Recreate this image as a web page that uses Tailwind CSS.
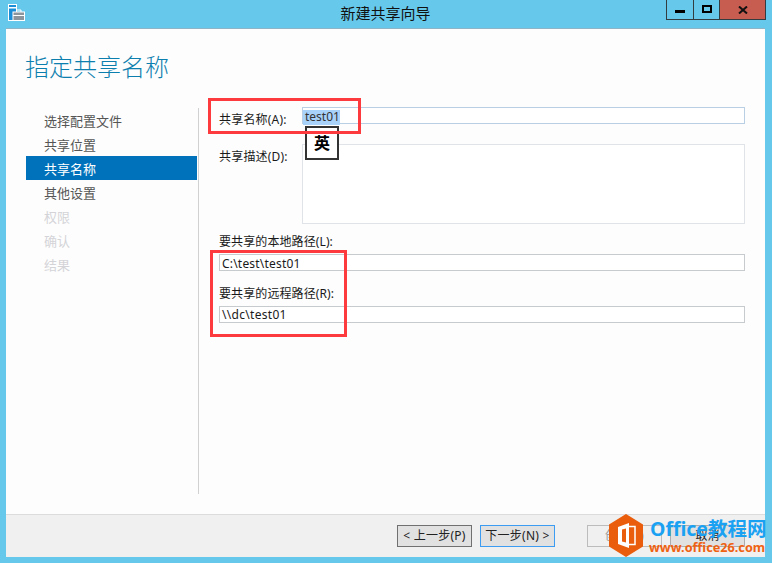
<!DOCTYPE html>
<html lang="zh-CN">
<head>
    <meta charset="UTF-8">
    <title>新建共享向导</title>
    <script src="https://cdn.jsdelivr.net/npm/@tailwindcss/browser@4"></script>
</head>
<body class="relative w-[772px] h-[563px] overflow-hidden bg-[#66c9eb] font-['Noto_Sans','Noto_Sans_CJK_SC',sans-serif] text-[12px] text-[#1a1a1a]">
    <!-- title bar -->
    <div class="relative h-[28px] flex justify-center">
        <svg class="absolute left-[8px] top-[4px]" width="17" height="17" viewBox="0 0 17 17">
            <rect x="0.5" y="0.5" width="8" height="16" fill="#1a8fd8" stroke="#fff"/>
            <rect x="1" y="3" width="7" height="1.5" fill="#fff"/>
            <rect x="5" y="8" width="11.5" height="8.5" fill="#8c959c" stroke="#fff"/>
            <path d="M8.5 8V6h4.5v2" fill="none" stroke="#fff"/>
            <path d="M5 11.5h11.500" stroke="#fff"/>
        </svg>
        <span class="text-[15px] leading-[27px] -ml-[1px] text-[#111]">新建共享向导</span>
        <div class="absolute left-[666px] top-0 flex h-[20px] border border-t-0 border-[#333c40]">
            <div class="w-[27px] flex items-center justify-center border-r border-[#333c40]"><div class="w-[10px] h-[3px] mt-[4px] bg-black"></div></div>
            <div class="w-[26px] flex items-center justify-center border-r border-[#333c40]"><div class="w-[10px] h-[8px] -mt-[2px] border-2 border-black"></div></div>
            <div class="w-[45px] flex items-center justify-center bg-[#c75c50]">
                <svg width="10" height="8" viewBox="0 0 10 8"><path d="M1 0.500l8 7M9 0.500l-8 7" stroke="#111" stroke-width="2"/></svg>
            </div>
        </div>
    </div>

    <!-- client area -->
    <div class="ml-[6px] w-[759px] h-[529px] flex flex-col bg-[#fdfdfd] border-t border-[#8fb4c6]">
        <div class="flex-1 flex flex-col pl-[20px]">
            <h1 class="mt-[21px] -ml-[1px] h-[58px] text-[24px] leading-[34px] font-light text-[#0d7fae]">指定共享名称</h1>

            <div class="flex">
                <ul class="w-[171px] text-[13px] text-[#555]">
                    <li class="h-[24px] leading-[26px] pl-[18px]">选择配置文件</li>
                    <li class="h-[24px] leading-[26px] pl-[18px]">共享位置</li>
                    <li class="h-[24px] leading-[26px] pl-[18px] bg-[#0072bb] text-white">共享名称</li>
                    <li class="h-[24px] leading-[26px] pl-[18px]">其他设置</li>
                    <li class="h-[24px] leading-[26px] pl-[18px] text-[#d4d4d8]">权限</li>
                    <li class="h-[24px] leading-[26px] pl-[18px] text-[#d4d4d8]">确认</li>
                    <li class="h-[24px] leading-[26px] pl-[18px] text-[#d4d4d8]">结果</li>
                </ul>

                <div class="w-[1px] ml-[1px] h-[386px] bg-[#cfd1d3]"></div>

                <div class="pl-[20px] w-[547px]">
                    <div class="flex h-[37px] -mt-[1px]">
                        <label class="w-[83px] pt-[4px] leading-[18px] tracking-[0.2px]">共享名称(A):</label>
                        <div class="w-[443px] h-[17px] border border-[#b8cfe4] bg-white">
                            <span class="inline-block h-[15px] bg-[#a9d2fb] pl-[2px] text-[12px] leading-[14px] text-[#333]">test01</span>
                        </div>
                    </div>
                    <div class="flex h-[87px]">
                        <label class="w-[83px] pt-[4px] leading-[18px] tracking-[0.2px]">共享描述(D):</label>
                        <div class="w-[443px] h-[80px] border border-[#e0e3e8] bg-white"></div>
                    </div>
                    <div class="leading-[18px] pt-[2px] tracking-[0.1px]">要共享的本地路径(L):</div>
                    <div class="mt-[3px] h-[17px] w-[526px] border border-[#c8cbce] bg-white pl-[2px] leading-[17px] tracking-[0.2px]">C:\test\test01</div>
                    <div class="mt-[14px] leading-[18px] tracking-[0.1px]">要共享的远程路径(R):</div>
                    <div class="mt-[3px] h-[17px] w-[526px] border border-[#c8cbce] bg-white pl-[2px] leading-[15px] tracking-[0.3px]">\\dc\test01</div>
                </div>
            </div>
        </div>

        <!-- footer buttons -->
        <div class="h-[43px] flex gap-[8px] pt-[10px] pl-[391px] bg-[#f0f0f0] border-t border-[#dcdcdc]">
            <button class="w-[75px] h-[22px] border border-[#707070] bg-[#e1e1e1] text-[12px] leading-[18px] tracking-[0.25px] text-[#222]">&lt; 上一步(P)</button>
            <button class="w-[75px] h-[22px] border border-[#3c9cf2] bg-[#e1e1e1] text-[12px] leading-[18px] tracking-[0.25px] text-[#222]">下一步(N) &gt;</button>
            <button class="ml-[24px] w-[75px] h-[22px] border border-[#bcbcbc] bg-[#f0f0f0] text-[12px] leading-[18px] text-[#999]">创建(C)</button>
            <button class="w-[75px] h-[22px] border border-[#adadad] bg-[#e1e1e1] text-[12px] leading-[18px] text-[#222]">取消</button>
        </div>
    </div>

    <!-- IME indicator -->
    <div class="absolute left-[305px] top-[126px] w-[34px] h-[34px] border-2 border-[#333] bg-white flex items-center justify-center text-[16px] font-bold text-black">英</div>

    <!-- red annotation boxes -->
    <div class="absolute left-[208px] top-[98px] w-[153px] h-[36px] border-[3px] border-[#fd3a3d]"></div>
    <div class="absolute left-[210px] top-[250px] w-[137px] h-[87px] border-[3px] border-[#fd3a3d]"></div>

    <!-- watermark -->
    <svg class="absolute left-[609px] top-[514px]" width="34" height="43" viewBox="0 0 34 43">
        <path d="M17 0L34 10.500V32.500L17 43L0 32.500V10.500Z" fill="#e95d0c"/>
        <path d="M9 13L20 9V34L9 30Z" fill="#fff"/>
        <path d="M20 12.500H26V30.500H20" fill="none" stroke="#fff" stroke-width="1.500"/>
        <path d="M13 15.500L17 14.500V28.500L13 27.500Z" fill="#e95d0c"/>
    </svg>
    <div class="absolute left-[650px] top-[516px] text-[19.500px] leading-[26px] font-bold text-[#1ba1f2] whitespace-nowrap">Office教程网</div>
    <div class="absolute left-[649px] top-[539px] text-[12.700px] leading-[17px] font-bold text-[#ee6212] whitespace-nowrap">www.office26.com</div>
</body>
</html>
